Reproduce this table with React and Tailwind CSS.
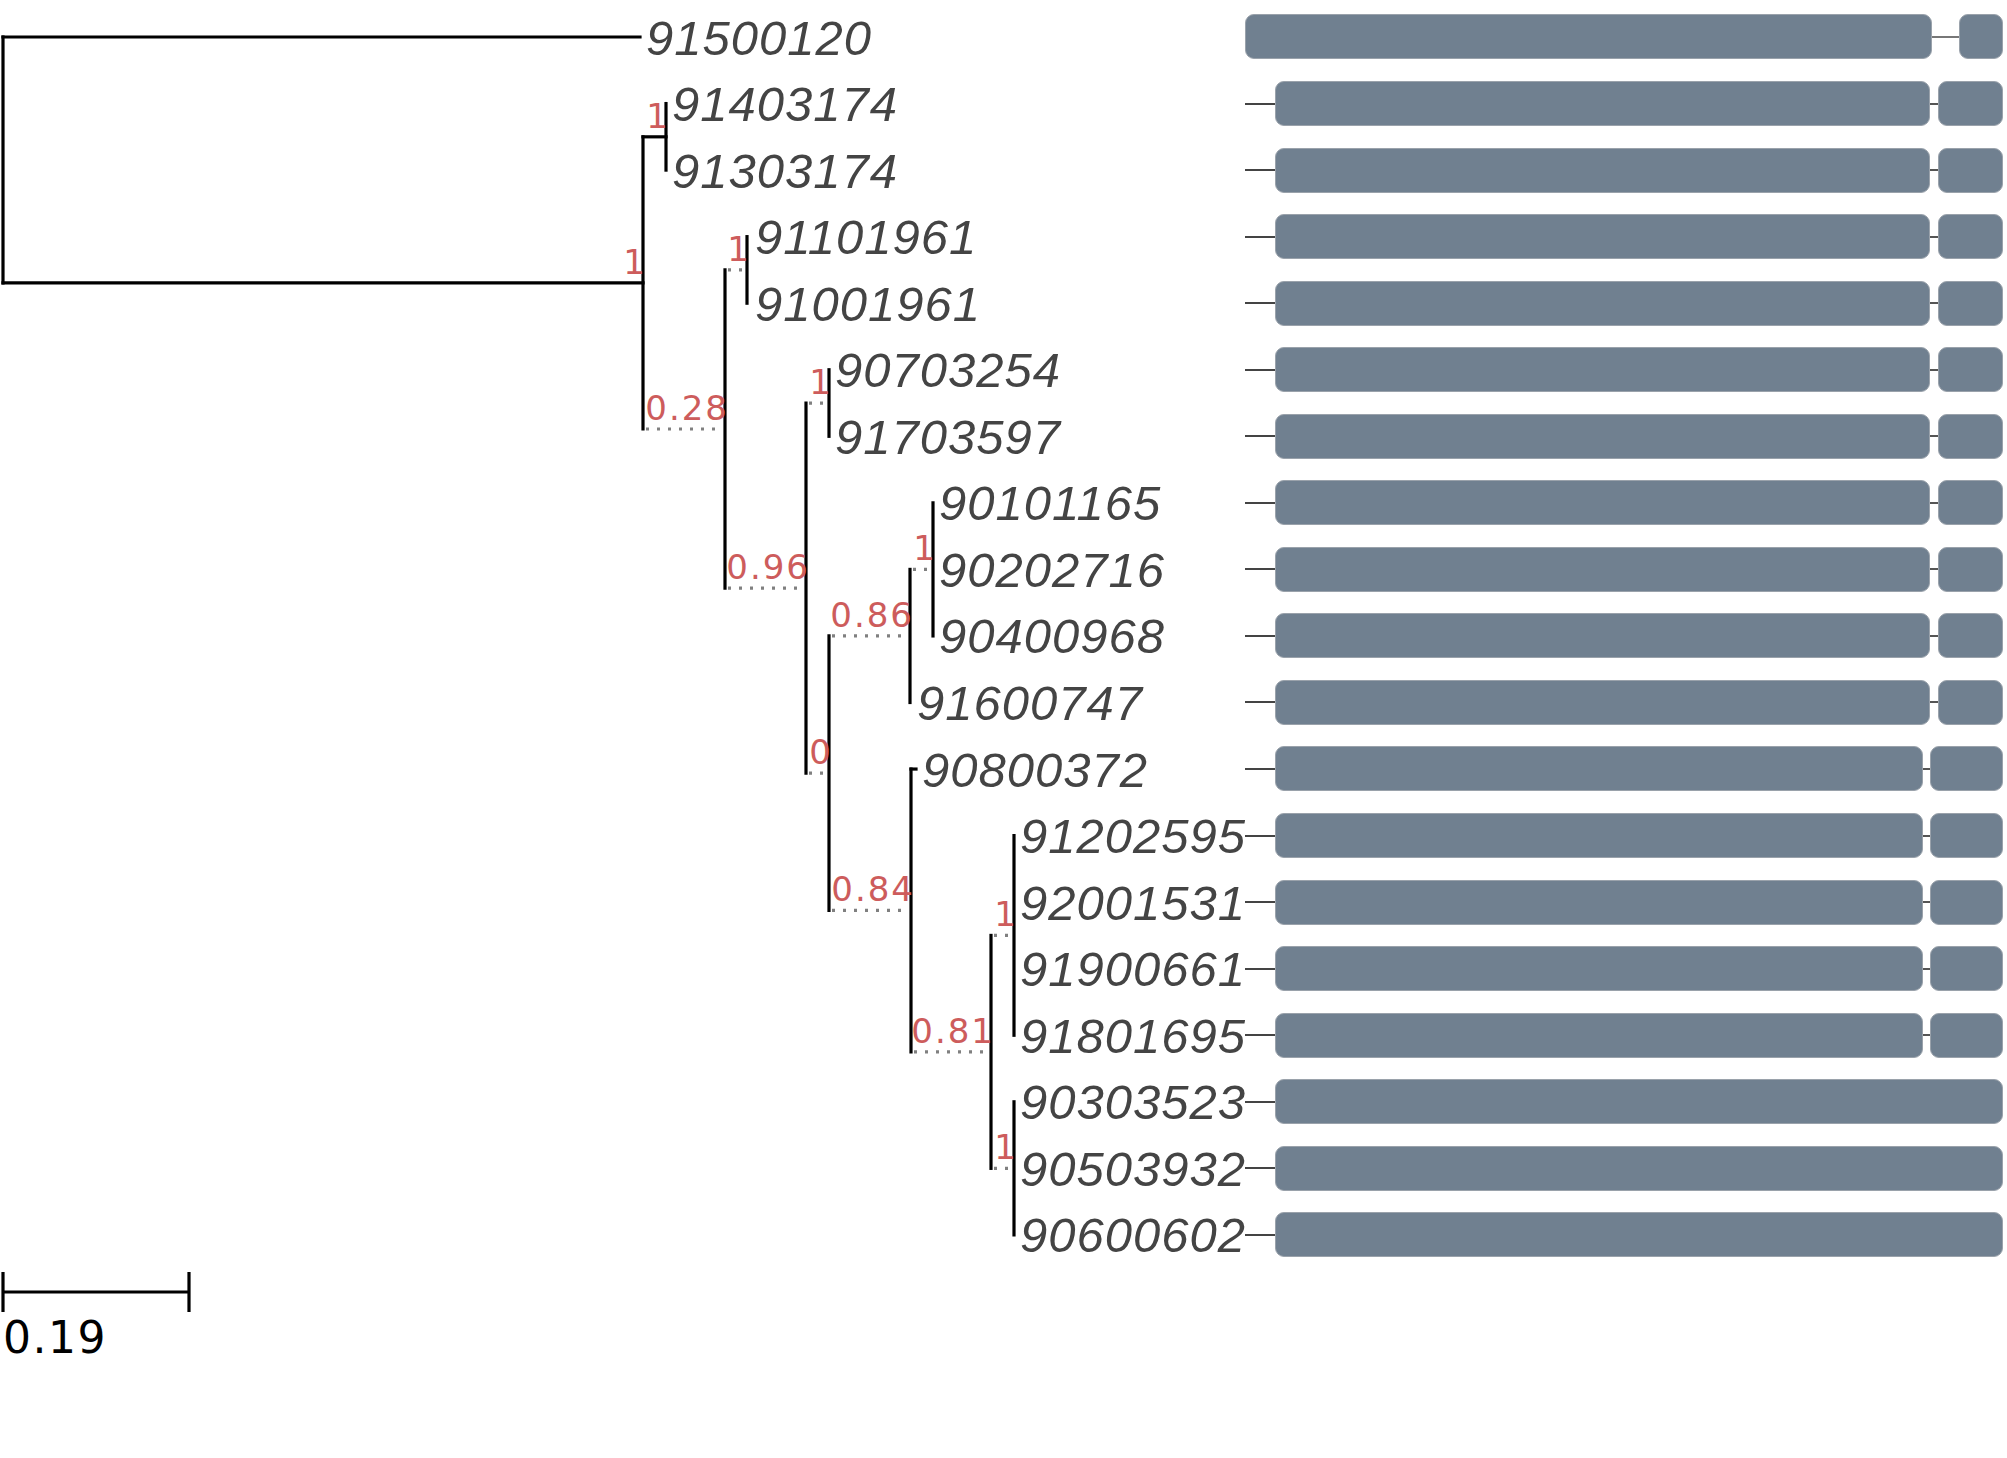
import React from 'react';

const ROW_H = 66.55;
const rowY = (i) => 37 + ROW_H * i;

// leaf labels: name, row, x where text starts
const LEAVES = [
  ['91500120', 0, 646],
  ['91403174', 1, 672],
  ['91303174', 2, 672],
  ['91101961', 3, 755],
  ['91001961', 4, 755],
  ['90703254', 5, 835],
  ['91703597', 6, 835],
  ['90101165', 7, 939],
  ['90202716', 8, 939],
  ['90400968', 9, 939],
  ['91600747', 10, 917],
  ['90800372', 11, 922],
  ['91202595', 12, 1020],
  ['92001531', 13, 1020],
  ['91900661', 14, 1020],
  ['91801695', 15, 1020],
  ['90303523', 16, 1020],
  ['90503932', 17, 1020],
  ['90600602', 18, 1020],
];

const mid = (a, b) => (a + b) / 2;
const yB = mid(rowY(1), rowY(2));
const yD = mid(rowY(3), rowY(4));
const yF = mid(rowY(5), rowY(6));
const yJ = rowY(8);
const yH = mid(rowY(8), rowY(10));
const yL = mid(rowY(12), rowY(15));
const yM = rowY(17);
const yK = mid(yL, yM);
const yI = mid(rowY(11), yK);
const yG = mid(yH, yI);
const yE = mid(yF, yG);
const yC = mid(yD, yE);
const yA = mid(yB, yC);

// solid branches [x1, y1, x2, y2]
const SOLID = [
  [3, rowY(0), 3, yA],
  [3, rowY(0), 640, rowY(0)],
  [3, yA, 643, yA],
  [643, yB, 643, yC],
  [643, yB, 666, yB],
  [666, rowY(1), 666, rowY(2)],
  [725, yD, 725, yE],
  [747, rowY(3), 747, rowY(4)],
  [806, yF, 806, yG],
  [829, rowY(5), 829, rowY(6)],
  [829, yH, 829, yI],
  [910, yJ, 910, rowY(10)],
  [933, rowY(7), 933, rowY(9)],
  [911, rowY(11), 911, yK],
  [911, rowY(11), 916, rowY(11)],
  [991, yL, 991, yM],
  [1014, rowY(12), 1014, rowY(15)],
  [1014, rowY(16), 1014, rowY(18)],
];

// dotted branches [x1, x2, y]
const DOTTED = [
  [643, 725, yC],
  [725, 747, yD],
  [725, 806, yE],
  [806, 829, yF],
  [806, 829, yG],
  [829, 910, yH],
  [829, 911, yI],
  [910, 933, yJ],
  [911, 991, yK],
  [991, 1014, yL],
  [991, 1014, yM],
];

// support values: text, right edge x, branch y
const SUPPORT = [
  ['1', 647, yA],
  ['1', 670, yB],
  ['0.28', 729, yC],
  ['1', 751, yD],
  ['0.96', 810, yE],
  ['1', 833, yF],
  ['0', 833, yG],
  ['0.86', 914, yH],
  ['0.84', 915, yI],
  ['1', 937, yJ],
  ['0.81', 995, yK],
  ['1', 1018, yL],
  ['1', 1018, yM],
];

const rowKind = (i) => {
  if (i === 0) return 'first';
  if (i <= 10) return 'a';
  if (i <= 15) return 'b';
  return 'single';
};

function Bar({ className }) {
  return <div className={`h-[45px] rounded-[9px] bg-[#708090] border border-[#9aa2ab] ${className}`} />;
}

function DomainRow({ kind }) {
  if (kind === 'first') {
    return (
      <div className="flex h-[66.55px] items-center">
        <Bar className="w-[688px]" />
        <div className="h-[2px] w-[27px] bg-[#777]" />
        <Bar className="w-[44px]" />
      </div>
    );
  }
  if (kind === 'single') {
    return (
      <div className="flex h-[66.55px] items-center">
        <div className="h-[2px] w-[30px] bg-[#444]" />
        <Bar className="w-[728px]" />
      </div>
    );
  }
  const a = kind === 'a';
  return (
    <div className="flex h-[66.55px] items-center">
      <div className="h-[2px] w-[30px] bg-[#444]" />
      <Bar className={a ? 'w-[655px]' : 'w-[648px]'} />
      <div className={`h-[2px] bg-[#555] ${a ? 'w-[8px]' : 'w-[7px]'}`} />
      <Bar className={a ? 'w-[65px]' : 'w-[73px]'} />
    </div>
  );
}

export default function App() {
  return (
    <div className="flex h-[1458px] w-[2007px] overflow-hidden bg-white">
      <svg width="1245" height="1400" className="shrink-0">
        {SOLID.map(([x1, y1, x2, y2], i) => (
          <line key={`s${i}`} x1={x1} y1={y1} x2={x2} y2={y2} stroke="#000" strokeWidth="3.2" strokeLinecap="square" />
        ))}
        {DOTTED.map(([x1, x2, y], i) => (
          <line key={`d${i}`} x1={x1 + 3} y1={y} x2={x2 - 2} y2={y} stroke="#808080" strokeWidth="3.2" strokeDasharray="3 8" />
        ))}
        {SUPPORT.map(([t, x, y], i) => (
          <text
            key={`p${i}`}
            x={x}
            y={y - 9}
            textAnchor="end"
            fill="#cd5c5c"
            className="font-['DejaVu_Sans',sans-serif] text-[34px] tracking-[2px]"
          >
            {t}
          </text>
        ))}
        {LEAVES.map(([name, row, x]) => (
          <text
            key={name}
            x={x}
            y={rowY(row) + 17.5}
            fill="#444"
            className="font-['Liberation_Sans',sans-serif] text-[49px] italic tracking-[1px]"
          >
            {name}
          </text>
        ))}

        {/* scale bar */}
        <line x1="3" y1="1292" x2="189" y2="1292" stroke="#000" strokeWidth="3.2" />
        <line x1="3" y1="1272" x2="3" y2="1312" stroke="#000" strokeWidth="3.2" />
        <line x1="189" y1="1272" x2="189" y2="1312" stroke="#000" strokeWidth="3.2" />
        <text x="3" y="1353" fill="#000" className="font-['DejaVu_Sans',sans-serif] text-[44px] tracking-[1.5px]">
          0.19
        </text>
      </svg>

      <div className="flex w-[758px] shrink-0 flex-col pt-[3.7px]">
        {LEAVES.map(([name, row]) => (
          <DomainRow key={name} kind={rowKind(row)} />
        ))}
      </div>
    </div>
  );
}
